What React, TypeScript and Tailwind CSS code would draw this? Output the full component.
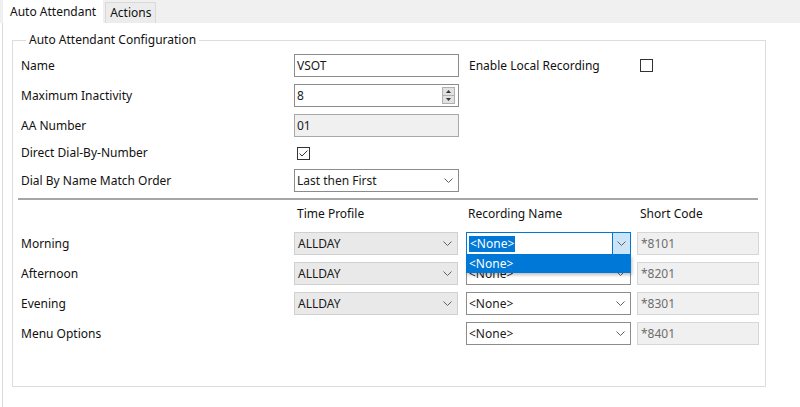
import React from 'react'

const font = { fontFamily: '"Noto Sans", "Open Sans", sans-serif' }

function Chevron({ className = '' }: { className?: string }) {
  return (
    <svg className={className} width="9" height="5" viewBox="0 0 9 5" fill="none"
         stroke="#606060" strokeWidth={1}>
      <path d="M0.5 0.5 L4.5 4.5 L8.5 0.5"/>
    </svg>
  )
}

function CheckBox({ checked }: { checked?: boolean }) {
  return (
    <div className="w-[13px] h-[13px] border border-[#333] bg-white flex items-center justify-center">
      {checked && (
        <svg width="11" height="11" viewBox="0 0 11 11" fill="none" stroke="#333" strokeWidth={1}>
          <path d="M1.5 5.5 L4 8 L9.5 2.5"/>
        </svg>
      )}
    </div>
  )
}

function TextBox({ value, disabled, children }: { value: string; disabled?: boolean; children?: React.ReactNode }) {
  return (
    <div className={`h-[23px] flex items-center pl-[2px] border ${disabled ? 'bg-[#f0f0f0] border-[#a8a8a8]' : 'bg-white border-[#8c8c8c]'}`}>
      <span className="flex-1 text-[#1a1a1a]">{value}</span>
      {children}
    </div>
  )
}

function GrayCombo({ value }: { value: string }) {
  return (
    <div className="h-[23px] flex items-center pl-[3px] pr-[5px] bg-[#e9e9e9] border border-[#d0d0d0]">
      <span className="flex-1 text-[#1a1a1a]">{value}</span>
      <Chevron/>
    </div>
  )
}

function WhiteCombo({ value }: { value: string }) {
  return (
    <div className="h-[23px] flex items-center pl-[2px] pr-[5px] bg-white border border-[#8c8c8c]">
      <span className="flex-1 text-[#1a1a1a]">{value}</span>
      <Chevron/>
    </div>
  )
}

function ActiveCombo() {
  return (
    <div className="relative">
      <div className="h-[23px] flex items-stretch bg-white border border-[#0078d7]">
        <div className="flex-1 flex items-center pl-[2px]">
          <span className="bg-[#0078d7] text-white leading-[16px] px-[1px]">&lt;None&gt;</span>
        </div>
        <div className="w-[18px] flex items-center justify-center bg-[#cce4f7] border-l border-[#0078d7]">
          <Chevron/>
        </div>
      </div>
      {/* open dropdown list */}
      <div className="absolute left-0 top-[23px] w-full h-[18px] bg-[#0078d7] text-white pl-[3px] flex items-center shadow-[1px_2px_3px_rgba(0,0,0,0.25)] z-10">
        &lt;None&gt;
      </div>
    </div>
  )
}

function ShortCode({ value }: { value: string }) {
  return (
    <div className="h-[23px] flex items-center pl-[3px] bg-[#f0f0f0] border border-[#d6d6d6] text-[#6d6d6d]">
      {value}
    </div>
  )
}

function Spinner() {
  return (
    <div className="w-[13px] h-[17px] mr-[3px] flex flex-col border border-[#b0b0b0] bg-[#e1e1e1]">
      <div className="flex-1 flex items-center justify-center border-b border-[#b0b0b0]">
        <svg width="5" height="3" viewBox="0 0 5 3"><path d="M0 3 L2.5 0 L5 3 Z" fill="#333"/></svg>
      </div>
      <div className="flex-1 flex items-center justify-center">
        <svg width="5" height="3" viewBox="0 0 5 3"><path d="M0 0 L2.5 3 L5 0 Z" fill="#333"/></svg>
      </div>
    </div>
  )
}

const schedule = [
  { label: 'Morning', profile: 'ALLDAY', code: '*8101', active: true },
  { label: 'Afternoon', profile: 'ALLDAY', code: '*8201' },
  { label: 'Evening', profile: 'ALLDAY', code: '*8301' },
  { label: 'Menu Options', profile: null, code: '*8401' },
]

export default function App() {
  return (
    <div className="w-[800px] h-[407px] bg-white overflow-hidden text-[12px] leading-none text-[#111]"
         style={font}>
      {/* Tabs */}
      <div className="h-[23px] bg-[#f0f0f0] flex items-end pl-[3px]">
        <div className="h-[23px] bg-white px-[7px] flex items-center">Auto Attendant</div>
        <div className="h-[21px] ml-[2px] px-[4px] bg-[#ececec] border border-b-0 border-[#d9d9d9] flex items-center">
          Actions
        </div>
      </div>

      <div className="h-[384px] ml-[2px] border-l border-[#dadada] pt-[9px] pl-[9px]">
        <fieldset className="w-[753px] border border-[#dcdcdc] pl-[8px] pr-[6px] pb-[41px]">
          <legend className="ml-[5px] px-[3px] leading-[16px]">Auto Attendant Configuration</legend>

          <div className="mt-[6px] grid grid-cols-[273px_165px_10px_171px_13px] gap-y-[7px] items-center">
            <span className="pt-[1px]">Name</span>
            <TextBox value="VSOT"/>
            <span/>
            <span className="pt-[1px]">Enable Local Recording</span>
            <CheckBox/>

            <span>Maximum Inactivity</span>
            <TextBox value="8"><Spinner/></TextBox>
            <span/><span/><span/>

            <span>AA Number</span>
            <TextBox value="01" disabled/>
            <span/><span/><span/>

            <span className="h-[18px] flex items-center">Direct Dial-By-Number</span>
            <div className="h-[18px] flex items-center pl-[3px]"><CheckBox checked/></div>
            <span/><span/><span/>

            <span>Dial By Name Match Order</span>
            <WhiteCombo value="Last then First"/>
            <span/><span/><span/>
          </div>

          <div className="mt-[6px] -ml-[3px] mr-[1px] border-t-2 border-[#a6a6a6]"/>

          <div className="mt-[6px] grid grid-cols-[273px_164px_8px_165px_6px_122px] gap-y-[7px] items-center">
            <span/>
            <span className="pl-[3px] h-[16px] flex items-center">Time Profile</span>
            <span/>
            <span className="pl-[2px]">Recording Name</span>
            <span/>
            <span className="pl-[3px]">Short Code</span>

            {schedule.map((row, i) => (
              <React.Fragment key={row.label}>
                <span className={i === 0 ? 'mt-[3px]' : ''}>{row.label}</span>
                <div className={i === 0 ? 'mt-[3px]' : ''}>
                  {row.profile && <GrayCombo value={row.profile}/>}
                </div>
                <span/>
                <div className={i === 0 ? 'mt-[3px]' : ''}>
                  {row.active ? <ActiveCombo/> : <WhiteCombo value="<None>"/>}
                </div>
                <span/>
                <div className={i === 0 ? 'mt-[3px]' : ''}>
                  <ShortCode value={row.code}/>
                </div>
              </React.Fragment>
            ))}
          </div>
        </fieldset>
      </div>
    </div>
  )
}
